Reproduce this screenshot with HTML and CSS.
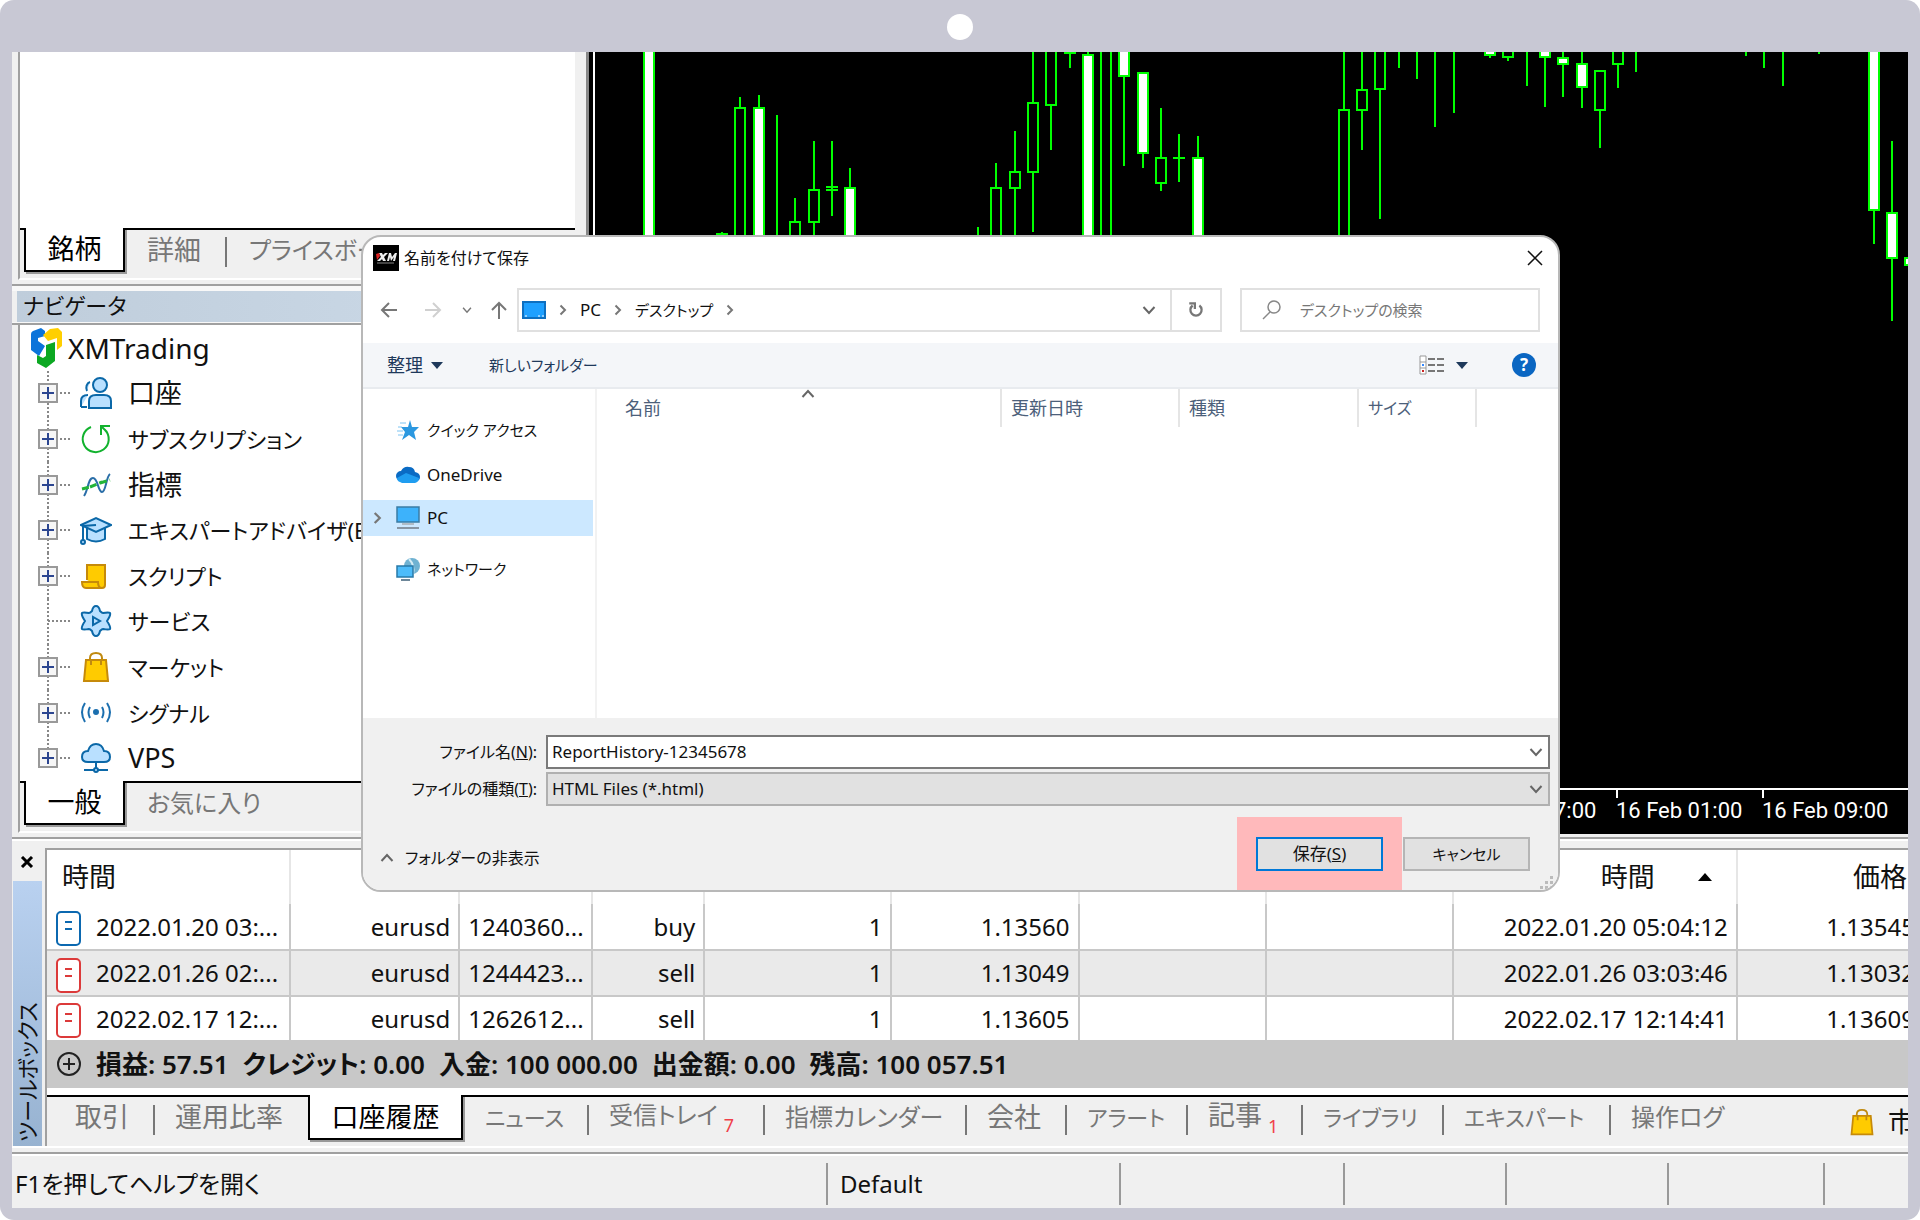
FILE: index.html
```html
<!DOCTYPE html>
<html lang="ja">
<head>
<meta charset="utf-8">
<meta name="viewport" content="width=device-width, initial-scale=1">
<title>名前を付けて保存</title>
<link rel="stylesheet" href="styles.css">
</head>
<body>
<svg class="defs" aria-hidden="true">
  <symbol id="bag" viewBox="0 0 32 32"><path d="M10 14V7c0-3 2-5 6-5s6 2 6 5v7" fill="none" stroke="#c08a10" stroke-width="2"/><path d="M6 9h20l2 21H4z" fill="#ffcb00" stroke="#c68a0a" stroke-width="2"/><path d="M11 14V8M21 14V8" stroke="#c08a10" stroke-width="2"/></symbol>
  <symbol id="order" viewBox="0 0 26 36"><rect x="1" y="1" width="23" height="33" rx="4" fill="#fff" stroke="currentColor" stroke-width="2"/><path d="M9 11h7M9 18h7" stroke="currentColor" stroke-width="2"/></symbol>
  <symbol id="gt" viewBox="0 0 8 12"><path d="M1.500 1.500L6 6l-4.500 4.500" fill="none" stroke="currentColor" stroke-width="2"/></symbol>
  <symbol id="down" viewBox="0 0 14 10"><path d="M1.500 2L7 8l5.500-6" fill="none" stroke="currentColor" stroke-width="2"/></symbol>
</svg>
<div class="frame">
  <div class="camera"></div>
  <main class="screen">
    <div class="workspace">
      <div class="side">
        <section class="panel">
          <div class="watch-list"></div>
          <nav class="tabs side-tabs">
            <button class="tab active">銘柄</button><button class="tab">詳細</button><button class="tab mixed">プライスボード</button>
          </nav>
        </section>
        <h2 class="caption">ナビゲータ</h2>
        <section class="panel">
          <ul class="tree">
            <li class="root">
              <svg class="logo" viewBox="0 0 32 40"><path d="M1 6Q1 4 3 3L11 0l4 3v5L8 10v3l7 5-6 10L1 22z" fill="#0b74da"/><path d="M13 7L20 1l8-1 4 4v14l-5 4V10l-9 3z" fill="#ffcf00"/><path d="M16 17l9-3v19l-9 7-9-5v-8l6 3 3-2z" fill="#0ca822"/></svg>
              <span>XMTrading</span></li>
            <li class="kanji"><span class="node"><button class="plus" aria-label="展開"></button></span>
              <svg class="ico" viewBox="0 0 32 32" fill="#b9e0ff" stroke="#0b68a8" stroke-width="2"><path d="M10 5a5 6 0 0 0-3 9M1 30v-6q0-6 7-6M1 30h6"/><circle cx="20" cy="8" r="7"/><path d="M9 31v-7q0-6 7-6h8q7 0 7 6v7z"/></svg>口座</li>
            <li><span class="node"><button class="plus" aria-label="展開"></button></span>
              <svg class="ico" viewBox="0 0 32 32" fill="none" stroke="#12b22e" stroke-width="2"><path d="M11 4a13 13 0 1 0 14 3M30 3h-9v9M21 3l6 6"/></svg>サブスクリプション</li>
            <li class="kanji"><span class="node"><button class="plus" aria-label="展開"></button></span>
              <svg class="ico" viewBox="0 0 32 32" fill="none" stroke-width="2"><path d="M4 27C8 22 8 9 13 9s5 14 9 14 4-15 8-18" stroke="#2a6ea8"/><path d="M2 20l8-2M10 18l12-5M20 14l10-3" stroke="#22b438" stroke-width="3" stroke-dasharray="7 3"/></svg>指標</li>
            <li><span class="node"><button class="plus" aria-label="展開"></button></span>
              <svg class="ico" viewBox="0 0 32 32" fill="#b9e0ff" stroke="#0b68a8" stroke-width="2"><path d="M7 14v11q9 5 18 0V14"/><path d="M1 11l15-7 15 7-15 7z"/><path d="M16 11l-13 1v14" fill="none"/><circle cx="3" cy="28" r="2"/></svg>エキスパートアドバイザ(EA)</li>
            <li><span class="node"><button class="plus" aria-label="展開"></button></span>
              <svg class="ico" viewBox="0 0 32 32" fill="#ffcb00" stroke="#c68a0a" stroke-width="2"><path d="M7 20V5h18v20q0 3-3 3H6q-4 0-4-6h16q0 6 4 6"/></svg>スクリプト</li>
            <li><span class="node leaf"></span>
              <svg class="ico" viewBox="0 0 32 32" fill="#b9e0ff" stroke="#0b68a8" stroke-width="2"><path d="M16 1q3 0 4 5 2 2 3 2 6-1 7 0 1 2-3 8 4 6 3 8-1 1-7 0-1 0-3 2-1 5-4 5t-4-5q-2-2-3-2-6 1-7 0-1-2 3-8-4-6-3-8 1-1 7 0 1 0 3-2 1-5 4-5z"/><path d="M13 12v8l7-4z"/></svg>サービス</li>
            <li><span class="node"><button class="plus" aria-label="展開"></button></span>
              <svg class="ico"><use href="#bag"/></svg>マーケット</li>
            <li><span class="node"><button class="plus" aria-label="展開"></button></span>
              <svg class="ico" viewBox="0 0 32 32" fill="none" stroke="#1b6faf" stroke-width="2"><path d="M5 6q-6 9 0 19M27 6q6 9 0 19M10 10q-3 5 0 11M22 10q3 5 0 11"/><circle cx="16" cy="15" r="2" fill="#1b6faf"/></svg>シグナル</li>
            <li class="last kanji"><span class="node"><button class="plus" aria-label="展開"></button></span>
              <svg class="ico" viewBox="0 0 32 32" fill="#b9e0ff" stroke="#0b68a8" stroke-width="2"><path d="M8 20q-6 0-6-5 0-6 6-6 2-7 8-7t8 7q6 0 6 6 0 5-6 5z"/><path d="M16 20v6M4 28h24" /><circle cx="16" cy="28" r="2"/></svg>VPS</li>
          </ul>
          <nav class="tabs side-tabs">
            <button class="tab active">一般</button><button class="tab mixed">お気に入り</button>
          </nav>
        </section>
      </div>
      <section class="chart">
        <svg class="candles" fill="none">
          <g transform="translate(-595 -52)" stroke="#00ff00" stroke-width="2">
            <path d="M722 232v6M740 97v10M759 95v12M777 115v200M795 198v23M814 141v48M814 223v80M832 141v75M850 168v19M978 227v80M996 163v24M1015 131v40M1015 189v80M1033 52v50M1033 173v59M1051 106v44M1070 52v16M1088 52v4M1124 77v89M1143 154v14M1161 108v49M1161 184v7M1179 134v48M1198 136v21M1344 52v57M1362 52v37M1362 111v39M1380 90v129M1399 52v16M1417 52v27M1435 52v75M1454 52v61M1490 56v2M1508 58v3M1527 52v34M1545 58v49M1563 52v6M1563 65v32M1582 52v12M1582 88v20M1600 111v37M1618 65v23M1636 52v20M1746 52v4M1764 52v16M1783 52v34M1819 52v2M1874 211v33M1892 141v71M1892 259v62"/>
            <path d="M735 108h10v200h-10zM790 222h10v80h-10zM809 190h10v32h-10zM991 188h10v120h-10zM1010 172h10v16h-10zM1028 103h10v69h-10zM1046 40h10v65h-10zM1101 40h10v220h-10zM1156 158h10v25h-10zM1339 110h10v150h-10zM1357 90h10v20h-10zM1375 40h10v49h-10zM1503 40h10v17h-10zM1595 71h10v39h-10zM1613 40h10v24h-10z"/>
            <path fill="#fff" d="M644 40h10v220h-10zM754 108h10v150h-10zM845 188h10v80h-10zM1083 55h10v200h-10zM1119 40h10v36h-10zM1138 73h10v80h-10zM1193 158h10v90h-10zM1485 40h10v15h-10zM1540 40h10v17h-10zM1558 58h10v6h-10zM1577 64h10v23h-10zM1869 40h10v170h-10zM1887 213h10v45h-10zM1905 258h10v7h-10z"/>
            <path d="M826 187h12M826 190h12M1064 53h12M1173 158h12M716 234h12"/>
          </g>
        </svg>
        <div class="axis"><time>15 Feb 17:00</time><time>16 Feb 01:00</time><time>16 Feb 09:00</time></div>
      </section>
    </div>

    <section class="toolbox">
      <div class="strip">
        <button class="strip-close" aria-label="閉じる"><svg viewBox="0 0 14 12"><path d="M2 1l10 10M12 1L2 11" stroke="#000" stroke-width="3"/></svg></button>
        <h2 class="strip-title"><span>ツールボックス</span></h2>
      </div>
      <div class="history">
        <div class="scroller">
        <table>
          <colgroup><col class="c1"><col class="c2"><col class="c3"><col class="c4"><col class="c5"><col class="c5"><col class="c5"><col class="c5"><col class="c6"><col class="c5"></colgroup>
          <thead><tr><th class="kanji left">時間</th><th></th><th></th><th></th><th></th><th></th><th></th><th></th><th class="kanji sorted">時間<svg viewBox="0 0 14 10"><path d="M0 9L7 1l7 8z"/></svg></th><th class="kanji">価格</th></tr></thead>
          <tbody>
            <tr><td class="when"><svg class="buy"><use href="#order"/></svg>2022.01.20 03:...</td><td>eurusd</td><td>1240360...</td><td>buy</td><td>1</td><td>1.13560</td><td></td><td></td><td>2022.01.20 05:04:12</td><td>1.13545</td></tr>
            <tr><td class="when"><svg class="sell"><use href="#order"/></svg>2022.01.26 02:...</td><td>eurusd</td><td>1244423...</td><td>sell</td><td>1</td><td>1.13049</td><td></td><td></td><td>2022.01.26 03:03:46</td><td>1.13032</td></tr>
            <tr><td class="when"><svg class="sell"><use href="#order"/></svg>2022.02.17 12:...</td><td>eurusd</td><td>1262612...</td><td>sell</td><td>1</td><td>1.13605</td><td></td><td></td><td>2022.02.17 12:14:41</td><td>1.13609</td></tr>
          </tbody>
        </table>
        </div>
        <div class="summary">
          <svg viewBox="0 0 26 26" fill="none" stroke="#222" stroke-width="2"><circle cx="13" cy="13" r="11"/><path d="M7 13h12M13 7v12"/></svg>
          <span>損益: 57.51</span><span>クレジット: 0.00</span><span>入金: 100 000.00</span><span>出金額: 0.00</span><span>残高: 100 057.51</span>
        </div>
        <nav class="tabs box-tabs">
          <button class="tab">取引</button><button class="tab">運用比率</button><button class="tab active">口座履歴</button><button class="tab kana">ニュース</button><button class="tab mixed">受信トレイ<sub>7</sub></button><button class="tab mixed">指標カレンダー</button><button class="tab">会社</button><button class="tab kana">アラート</button><button class="tab">記事<sub>1</sub></button><button class="tab kana">ライブラリ</button><button class="tab kana">エキスパート</button><button class="tab mixed">操作ログ</button>
          <button class="tab market"><svg><use href="#bag"/></svg>市場</button>
        </nav>
      </div>
    </section>

    <footer class="status"><span>F1を押してヘルプを開く</span><span>Default</span><span></span><span></span><span></span><span></span><span></span></footer>

    <form class="dialog" role="dialog" aria-labelledby="dlg-title">
      <header class="title">
        <svg class="xm" viewBox="0 0 26 26"><path d="M0 0h26v26H0z"/><path d="M4 16l4-4-2-4h3l1 2 2-2h3l-4 4 2 4h-3l-1-2-2 2zM14 16l2-8h2l1 4 3-4h2l-2 8h-2l1-4-3 4-1-4-1 4z" fill="#eee"/><path d="M3 9l3-1 1 3-3 4z" fill="#d22"/><path d="M4 18h17" stroke="#888"/></svg>
        <h1 id="dlg-title">名前を付けて保存</h1>
        <button type="button" class="close" aria-label="閉じる"><svg viewBox="0 0 16 16"><path d="M1 1l14 14M15 1L1 15" stroke="#111" stroke-width="1.500"/></svg></button>
      </header>
      <div class="nav">
        <button type="button" aria-label="戻る"><svg class="arrow" viewBox="0 0 18 18"><path d="M17 9H2M9 2L2 9l7 7"/></svg></button>
        <button type="button" class="forward" aria-label="進む"><svg class="arrow dim" viewBox="0 0 18 18"><path d="M1 9h15M9 2l7 7-7 7"/></svg></button>
        <button type="button" class="recent" aria-label="履歴"><svg class="tiny"><use href="#down"/></svg></button>
        <button type="button" class="parent" aria-label="上へ"><svg class="arrow" viewBox="0 0 18 18"><path d="M9 18V2M2 9l7-7 7 7"/></svg></button>
        <div class="address">
          <svg class="desk" viewBox="0 0 24 18"><path d="M1 1h22v16H1z" fill="#1ea0ff" stroke="#0d6fc0" stroke-width="2"/><path d="M3 15h2M16 15h2M20 15h2" stroke="#fff"/></svg>
          <svg class="sep"><use href="#gt"/></svg><a class="latin" href="#">PC</a><svg class="sep"><use href="#gt"/></svg><a href="#">デスクトップ</a><svg class="sep"><use href="#gt"/></svg>
          <button type="button" class="drop" aria-label="履歴"><svg class="chev"><use href="#down"/></svg></button>
          <button type="button" class="reload" aria-label="更新"><svg viewBox="0 0 16 16" fill="none" stroke="#777" stroke-width="2"><path d="M11 4a5 5 0 1 1-6 0M2 2h5v5"/></svg></button>
        </div>
        <label class="search"><svg viewBox="0 0 20 20" fill="none" stroke="#888" stroke-width="1.500"><circle cx="12" cy="7" r="6"/><path d="M8 12l-7 7"/></svg><input type="search" placeholder="デスクトップの検索" aria-label="デスクトップの検索"></label>
      </div>
      <div class="bar">
        <button type="button" class="organize">整理<svg class="tri" viewBox="0 0 12 7"><path d="M0 0h12L6 7z"/></svg></button>
        <button type="button">新しいフォルダー</button>
        <button type="button" class="view" aria-label="表示"><svg class="grid" viewBox="0 0 25 20" fill="none"><path d="M1 1h6v18H1zM1 7h6M1 13h6" stroke="#999" fill="#fff"/><path d="M9 4h7M18 4h7M9 10h7M18 10h7M9 16h7M18 16h7" stroke="#777" stroke-width="2"/><path d="M3 10h2" stroke="#38f" stroke-width="2"/><path d="M3 16h2" stroke="#c22" stroke-width="2"/></svg><svg class="tri" viewBox="0 0 12 7"><path d="M0 0h12L6 7z"/></svg></button>
        <button type="button" class="help" aria-label="ヘルプ">?</button>
      </div>
      <div class="body">
        <ul class="places">
          <li><svg viewBox="0 0 24 24"><path d="M14 2l2 7h7l-5 5 2 8-7-5-7 5 3-8-4-5h7z" fill="#2b98e0"/><path d="M4 5h6M2 9h4M1 13h6M2 17h5" stroke="#7cc4f2"/></svg>クイック アクセス</li>
          <li class="latin"><svg viewBox="0 0 24 24"><path d="M5 18a5 5 0 0 1 0-10q3-5 8-4 5 0 6 5 5 1 5 5 0 4-4 4z" fill="#0a6bc4"/><path d="M4 19q-3-1-3-4l9-5 13 5q0 4-4 5H6z" fill="#1f9df0"/></svg>OneDrive</li>
          <li class="sel latin"><svg class="sep"><use href="#gt"/></svg><svg viewBox="0 0 24 24"><path d="M1 1h22v15H1z" fill="#3db2fb" stroke="#3a7ca5" stroke-width="1.500"/><path d="M6 18h12" stroke="#b0bcc6" stroke-width="2"/><path d="M1 22h22" stroke="#8795a3" stroke-width="2"/></svg>PC</li>
          <li><svg viewBox="0 0 24 24"><circle cx="16" cy="9" r="8" fill="#6fb2d2"/><path d="M13 2q6 6 4 15" stroke="#d5ecf5" fill="none" stroke-width="2"/><path d="M1 9h16v11H1z" fill="#4dbcfa" stroke="#2879a8" stroke-width="1.500"/><path d="M5 23h9" stroke="#6d8799" stroke-width="2"/></svg>ネットワーク</li>
        </ul>
        <div class="files">
          <div class="cols"><span class="name">名前<svg><use href="#down"/></svg></span><span>更新日時</span><span>種類</span><span>サイズ</span></div>
        </div>
      </div>
      <div class="foot">
        <div class="fields">
          <label for="fname">ファイル名(<u>N</u>):</label>
          <div class="combo"><input id="fname" type="text" value="ReportHistory-12345678"><svg class="chev"><use href="#down"/></svg></div>
          <label for="ftype">ファイルの種類(<u>T</u>):</label>
          <div class="combo grey"><select id="ftype"><option>HTML Files (*.html)</option></select><svg class="chev"><use href="#down"/></svg></div>
        </div>
        <div class="actions">
          <button type="button" class="fold"><svg class="up"><use href="#down"/></svg>フォルダーの非表示</button>
          <div class="mark"><button type="submit" class="btn primary">保存(<u>S</u>)</button></div>
          <button type="button" class="btn">キャンセル</button>
          <svg class="grip" viewBox="0 0 14 14" fill="#bbb"><path d="M10 0h3v3h-3zM10 5h3v3h-3zM5 5h3v3H5zM10 10h3v3h-3zM5 10h3v3H5zM0 10h3v3H0z"/></svg>
        </div>
      </div>
    </form>
  </main>
</div>
</body>
</html>
```
FILE: styles.css
```css
* { box-sizing: border-box; }
html, body { margin: 0; background: #fff; }
body {
  font: 24px/32px "Noto Sans", "Noto Sans CJK JP", sans-serif;
  font-feature-settings: "palt";
  color: #111;
}
button, input, select {
  font: inherit;
  font-feature-settings: inherit;
  color: inherit;
  background: none;
  border: 0;
  padding: 0;
  margin: 0;
}
a { color: inherit; text-decoration: none; }
h1, h2 { margin: 0; font-weight: 400; font-size: inherit; }
ul { list-style: none; margin: 0; padding: 0; }
svg { display: block; flex: none; }
.defs { position: absolute; width: 0; height: 0; }

/* device frame */
.frame {
  min-height: 100vh;
  padding: 0 12px 12px;
  background: #c8c8d4;
  border-radius: 14px;
  display: flex;
  flex-direction: column;
}
.camera { width: 26px; height: 26px; margin: 14px auto 12px; border-radius: 50%; background: #fff; }
.screen {
  position: relative;
  flex: 1;
  display: flex;
  flex-direction: column;
  background: #f0f0f0;
  overflow: hidden;
}

/* upper half */
.workspace { display: flex; background: #f0f0f0; }
.side { width: 565px; flex: none; padding-bottom: 4px; }
.panel { margin: 0 2px 0 6px; border-left: 2px solid #a0a0a0; border-bottom: 2px solid #fff; }
.watch-list { height: 176px; background: #fff; }
.tabs { display: flex; border-top: 2px solid #000; }
.side-tabs { height: 50px; padding-left: 4px; }
.tab {
  height: 44px;
  font-size: 27px;
  color: #777;
  text-align: left;
  white-space: nowrap;
}
.tab.mixed { font-size: 24px; }
.tab.kana { font-size: 22px; }
.tab.active {
  height: 44px;
  margin-top: -2px;
  color: #000;
  text-align: center;
  background: #fff;
  border: 2px solid #000;
  border-top: 0;
  box-shadow: 2px 2px 0 #999;
}
.side-tabs .tab { padding: 0 24px; height: 40px; }
.side-tabs .tab.active { width: 101px; padding: 0; height: 44px; }
.side-tabs .tab.active + .tab { padding-left: 22px; }
.side-tabs .tab + .tab + .tab {
  background: linear-gradient(#777, #777) 0 7px / 2px 30px no-repeat;
}
.caption {
  margin: 4px 0 0;
  padding: 4px 12px 0 11px;
  height: 41px;
  font-size: 22px;
  line-height: 30px;
  border-top: 2px solid #a0a0a0;
  border-bottom: 2px solid #a0a0a0;
  background: linear-gradient(90deg, #f0f0f0 5px, #bfcddb 5px, #cddbe9) 0 5px / 100% 31px no-repeat #f8f8f8;
}
.tree { height: 456px; font-size: 22px; background: #fff; display: grid; grid-template-rows: repeat(10, 1fr); }
.tree li { display: flex; align-items: center; padding-left: 18px; white-space: nowrap; }
.tree .root { padding-left: 10px; font-size: 28px; }
.logo { width: 32px; height: 40px; margin-right: 6px; }
.node {
  align-self: stretch;
  width: 34px;
  display: flex;
  align-items: center;
  background:
    repeating-linear-gradient(#888 0 2px, transparent 2px 4px) 9px 0 / 2px 100% no-repeat,
    repeating-linear-gradient(90deg, #888 0 2px, transparent 2px 4px) 10px 50% / 24px 2px no-repeat;
}
.last .node { background-size: 2px 50%, 24px 2px; }
.plus {
  width: 20px;
  height: 20px;
  border: 2px solid #999;
  background:
    linear-gradient(#2b4590, #2b4590) center / 12px 2px no-repeat,
    linear-gradient(#2b4590, #2b4590) center / 2px 12px no-repeat,
    #f6f6f6;
}
.ico { width: 32px; height: 34px; margin: 0 16px 0 8px; }

.chart {
  flex: 1;
  min-width: 0;
  margin: 0 0 3px 9px;
  border-left: 3px solid #888;
  background: linear-gradient(90deg, #000 4px, #fff 4px 6px, #000 6px);
  padding-left: 6px;
  display: flex;
  flex-direction: column;
}
.candles { width: 100%; flex: 1; }
.axis {
  height: 46px;
  border-top: 2px solid #fff;
  color: #fff;
  display: flex;
  justify-content: flex-end;
  font: 22px/42px Roboto, sans-serif;
}
.axis time { width: 146px; background: linear-gradient(#fff, #fff) 0 0 / 2px 8px no-repeat; white-space: nowrap; }

/* toolbox */
.toolbox {
  display: flex;
  border-top: 2px solid #a0a0a0;
  box-shadow: inset 0 2px #fff;
  padding: 9px 0 4px;
}
.strip { width: 33px; flex: none; display: flex; flex-direction: column; padding: 0 3px 0 1px; }
.strip-close { height: 33px; padding-left: 7px; }
.strip-close svg { width: 14px; height: 12px; margin-top: -6px; }
.strip-title {
  flex: 1;
  background: linear-gradient(#b9d1f0, #97b2d0);
  display: flex;
  align-items: flex-end;
  padding-bottom: 6px;
}
.strip-title span {
  writing-mode: vertical-rl;
  text-orientation: sideways;
  transform: rotate(180deg);
  font-size: 22px;
  line-height: 28px;
}
.history { flex: 1; min-width: 0; border-left: 2px solid #a0a0a0; border-top: 2px solid #a0a0a0; }
.scroller { overflow: hidden; background: #fff; }
table { border-collapse: collapse; table-layout: fixed; width: 1878px; }
.c1 { width: 243px; } .c2 { width: 169px; } .c3 { width: 133px; } .c4 { width: 112px; }
.c5 { width: 187px; } .c6 { width: 284px; }
th { height: 54px; font-weight: 400; text-align: right; padding: 0 16px; border-right: 2px solid #e6e6e6; }
td { height: 46px; padding: 0 8px; text-align: right; border-right: 2px solid #c8c8c8; border-bottom: 2px solid #c8c8c8; white-space: nowrap; }
tbody tr:last-child td { height: 44px; border-bottom: 0; }
tbody tr:nth-child(2) { background: #eaeaea; }
.tree .kanji, th.kanji { font-size: 27px; }
th.left { text-align: left; padding-left: 15px; }
th.sorted { padding-right: 24px; }
th.sorted svg { display: inline-block; width: 14px; height: 10px; margin-left: 43px; vertical-align: 5px; }
.when svg { width: 26px; height: 36px; display: inline-block; vertical-align: middle; margin: -8px 14px -8px 1px; }
td.when { text-align: left; }
.buy { color: #0b68b0; } .sell { color: #dc3a3a; }
.summary {
  height: 48px;
  background: #c8c8c8;
  display: flex;
  align-items: center;
  gap: 14px;
  font-size: 26px;
  font-weight: 600;
  padding-left: 9px;
  white-space: nowrap;
}
.summary svg { width: 26px; height: 26px; }
.box-tabs {
  display: grid;
  grid-template-columns: 106px 155px 155px 124px 176px 202px 100px 121px 115px 141px 167px 141px 1fr;
  height: 53px;
  margin-top: 7px;
  box-shadow: 0 -7px #fff;
}
.box-tabs .tab { height: 39px; padding-left: 22px; background: linear-gradient(#777, #777) 0 8px / 2px 30px no-repeat; }
.box-tabs .tab:first-child, .box-tabs .active + .tab { background: none; }
.box-tabs .tab:first-child { padding-left: 28px; }
.box-tabs .tab.active { background: #fff; height: 45px; padding: 0; }
.box-tabs sub { font-size: 18px; line-height: 18px; color: #f0404a; vertical-align: -8px; margin-left: 6px; }
.box-tabs .market { background: none; display: flex; align-items: center; gap: 12px; color: #111; padding-left: 98px; padding-top: 10px; overflow: hidden; }
.market svg { width: 28px; height: 34px; flex: none; }

.status {
  flex: 1;
  min-height: 54px;
  display: grid;
  grid-template-columns: 814px 293px 224px 162px 162px 156px 1fr;
  border-top: 2px solid #a0a0a0;
  box-shadow: inset 0 2px #fff, 0 -4px #f0f0f0, 0 -6px #fff;
  line-height: 42px;
  padding-top: 9px;
}
.status span { height: 42px; border-left: 2px solid #999; padding-left: 12px; }
.status span:first-child { border: 0; padding-left: 3px; }

/* save dialog */
.dialog {
  position: absolute;
  left: 349px;
  right: 348px;
  top: 183px;
  border: 2px solid #b8b8b8;
  border-radius: 20px;
  background: #fff;
  overflow: hidden;
  font-size: 15px;
  line-height: 24px;
}
.dialog .latin { font-size: 17px; }
.title { display: flex; align-items: center; height: 42px; padding: 0 15px 0 10px; }
.title h1 { flex: 1; font-size: 16px; margin-left: 5px; }
.xm { width: 26px; height: 26px; }
.close svg { width: 16px; height: 16px; }
.nav { display: flex; align-items: center; padding: 9px 18px 11px 17px; height: 64px; }
.arrow { width: 18px; height: 18px; fill: none; stroke: #777; stroke-width: 2; }
.dim { stroke: #d0d0d0; }
.tiny { width: 10px; height: 8px; color: #777; }
.nav > button { margin-right: 26px; }
.nav > .forward { margin-right: 20px; }
.nav > .recent { margin-right: 18px; }
.nav > .parent { margin-right: 9px; }
.address, .search { display: flex; align-items: center; height: 44px; border: 2px solid #e0e0e0; }
.address { flex: 1; padding-left: 3px; gap: 13px; margin-right: 18px; }
.desk { width: 24px; height: 18px; }
.sep { width: 8px; height: 12px; color: #777; }
.drop { margin-left: auto; }
.chev { width: 14px; height: 10px; color: #666; }
.reload { height: 40px; width: 50px; border-left: 2px solid #e0e0e0; display: flex; justify-content: center; align-items: center; margin-left: 1px; }
.reload svg { width: 18px; height: 20px; }
.search { width: 300px; padding-left: 20px; gap: 18px; }
.search svg { width: 20px; height: 22px; }
.search input { flex: 1; min-width: 0; outline: 0; appearance: none; }
.search input::placeholder { color: #777; opacity: 1; }
.bar { display: flex; align-items: center; height: 46px; background: #f4f6f9; border-bottom: 2px solid #e8ebef; color: #1e395b; padding: 0 22px 0 24px; gap: 46px; }
.bar button { display: flex; align-items: center; gap: 8px; }
.bar .organize { font-size: 18px; }
.tri { width: 12px; height: 7px; fill: #1e395b; }
.bar .view { margin-left: auto; gap: 12px; }
.grid { width: 25px; height: 22px; }
.bar .help { width: 24px; height: 24px; border-radius: 50%; background: #0a66c2; color: #fff; font-size: 17px; font-weight: 700; justify-content: center; margin-left: -2px; }
.body { display: flex; height: 329px; }
.places { width: 234px; border-right: 2px solid #f2f2f2; padding-top: 23px; }
.places li { display: flex; align-items: center; gap: 7px; height: 36px; padding-left: 33px; margin-bottom: 9px; }
.places li + li { margin-bottom: 7px; }
.places .sel { background: #cce8ff; padding-left: 10px; margin-right: 2px; }
.places svg { width: 24px; height: 24px; }
.places .sel .sep { width: 9px; height: 14px; margin-right: 7px; }
.places .sel + li { margin-top: 15px; }
.files { flex: 1; }
.cols { display: grid; grid-template-columns: 405px 178px 179px 118px; height: 37px; font-size: 18px; line-height: 38px; color: #4c607a; }
.cols span { border-right: 2px solid #e5e5e5; padding-left: 9px; }
.cols .name { padding-left: 28px; display: grid; grid-template-columns: 176px auto; }
.cols svg, .up { width: 14px; height: 10px; transform: rotate(180deg); color: #666; }
.cols span:last-child { font-size: 16px; }
.foot { background: #f0f0f0; padding-top: 17px; }
.fields { display: grid; grid-template-columns: 174px 1fr; column-gap: 9px; row-gap: 3px; padding-right: 8px; font-size: 16px; }
.fields label { text-align: right; line-height: 34px; }
.combo { display: flex; align-items: center; height: 34px; border: 2px solid #7a7a7a; background: #fff; padding: 0 5px 0 4px; font-size: 17px; }
.combo input, .combo select { flex: 1; min-width: 0; appearance: none; outline: 0; }
.combo.grey { background: #e1e1e1; border-color: #b0b0b0; }
.actions { display: flex; align-items: flex-start; margin-top: 11px; height: 73px; padding-right: 4px; }
.fold { display: flex; align-items: center; gap: 11px; padding: 29px 0 0 17px; margin-right: auto; font-size: 16px; }
.mark { background: #ffb9bb; padding: 20px 19px; width: 165px; height: 73px; }
.btn { width: 127px; height: 34px; border: 2px solid #b5b5b5; background: #e1e1e1; }
.primary { border-color: #0078d7; font-size: 17px; }
.actions > .btn { margin: 20px 10px 0 1px; }
.grip { width: 14px; height: 14px; align-self: flex-end; }
```
